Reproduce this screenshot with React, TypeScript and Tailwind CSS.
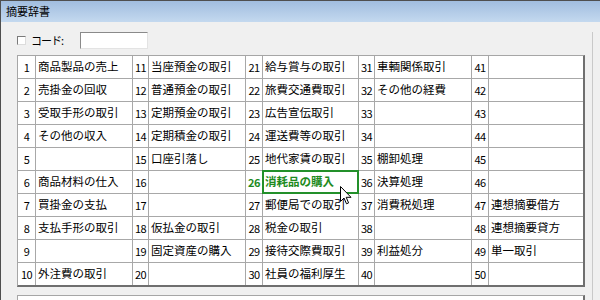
import React from 'react';

const columns: string[][] = [
  ['商品製品の売上', '売掛金の回収', '受取手形の取引', 'その他の収入', '', '商品材料の仕入', '買掛金の支払', '支払手形の取引', '', '外注費の取引'],
  ['当座預金の取引', '普通預金の取引', '定期預金の取引', '定期積金の取引', '口座引落し', '', '', '仮払金の取引', '固定資産の購入', ''],
  ['給与賞与の取引', '旅費交通費取引', '広告宣伝取引', '運送費等の取引', '地代家賃の取引', '消耗品の購入', '郵便局での取引', '税金の取引', '接待交際費取引', '社員の福利厚生'],
  ['車輌関係取引', 'その他の経費', '', '', '棚卸処理', '決算処理', '消費税処理', '', '利益処分', ''],
  ['', '', '', '', '', '', '連想摘要借方', '連想摘要貸方', '単一取引', ''],
];

const SELECTED = 26;

const App: React.FC = () => {
  const rows = Array.from({ length: 10 }, (_, r) => r);

  return (
    <div className="relative w-[600px] h-[300px] overflow-hidden bg-[#f0f0f0] border-l border-[#4f4f4f] font-['Noto_Sans_CJK_JP',sans-serif] text-black">
      {/* Title bar */}
      <div className="h-[22px] border-t border-[#4f4f4f] bg-gradient-to-b from-[#a1bddf] to-[#c4d9ef] flex items-center pl-[5px] text-[11px] leading-none">
        摘要辞書
      </div>

      <div className="h-[278px] border-r border-[#c9c9c9] w-[592px] pl-[16px]">
        {/* Code filter row */}
        <div className="mt-[10px] h-[17px] flex items-center">
          <span className="w-[9px] h-[9px] bg-white border border-t-[#7a7a7a] border-l-[#7a7a7a] border-b-[#dcdcdc] border-r-[#dcdcdc]" />
          <span className="ml-[5px] text-[11px] leading-none tracking-[-1px]">コード:</span>
          <div className="ml-[17px] w-[68px] h-[17px] bg-white border border-t-[#8a8a8a] border-l-[#8a8a8a] border-b-[#e3e3e3] border-r-[#e3e3e3]" />
        </div>

        {/* Dictionary grid */}
        <div className="mt-[6px] w-[568px] border-t border-l border-[#a6a6a6] border-r-2 border-b-2 border-r-[#6f6f6f] border-b-[#6f6f6f] bg-[#a8a8a8]">
          <div className="grid grid-cols-[17px_96px_15px_96px_16px_95px_15px_96px_16px_94px] auto-rows-[22px] gap-px">
            {rows.map((r) =>
              columns.map((col, c) => {
                const num = c * 10 + r + 1;
                const sel = num === SELECTED;
                return (
                  <React.Fragment key={`${r}-${c}`}>
                    <div
                      className={`bg-white flex items-center justify-center text-[11px] leading-none tracking-[-0.5px] ${
                        sel ? 'text-[#1e8b1e] font-bold' : ''
                      }`}
                    >
                      {num}
                    </div>
                    <div
                      className={`bg-white flex items-center pl-[2px] text-[11.5px] leading-none whitespace-nowrap overflow-hidden ${
                        sel ? 'text-[#1e8b1e] font-bold outline-2 outline-[#23902a] -outline-offset-1 relative z-10' : ''
                      }`}
                    >
                      {col[r]}
                    </div>
                  </React.Fragment>
                );
              })
            )}
          </div>
        </div>

        {/* Lower panel (partially visible) */}
        <div className="mt-[8px] w-[568px] h-[20px] bg-white border-t border-l border-[#a6a6a6] border-r-2 border-r-[#6f6f6f]" />
      </div>

      {/* Mouse cursor over the selected cell */}
      <svg className="absolute left-[339px] top-[186px] z-20" width="12" height="19" viewBox="0 0 12 19">
        <path
          d="M0.5 0.5 L0.5 15.5 L4 12 L6.5 17.8 L8.6 16.9 L6.2 11.3 L11 11.3 Z"
          fill="#ffffff"
          stroke="#000000"
          strokeWidth="1"
          strokeLinejoin="miter"
        />
      </svg>
    </div>
  );
};

export default App;
